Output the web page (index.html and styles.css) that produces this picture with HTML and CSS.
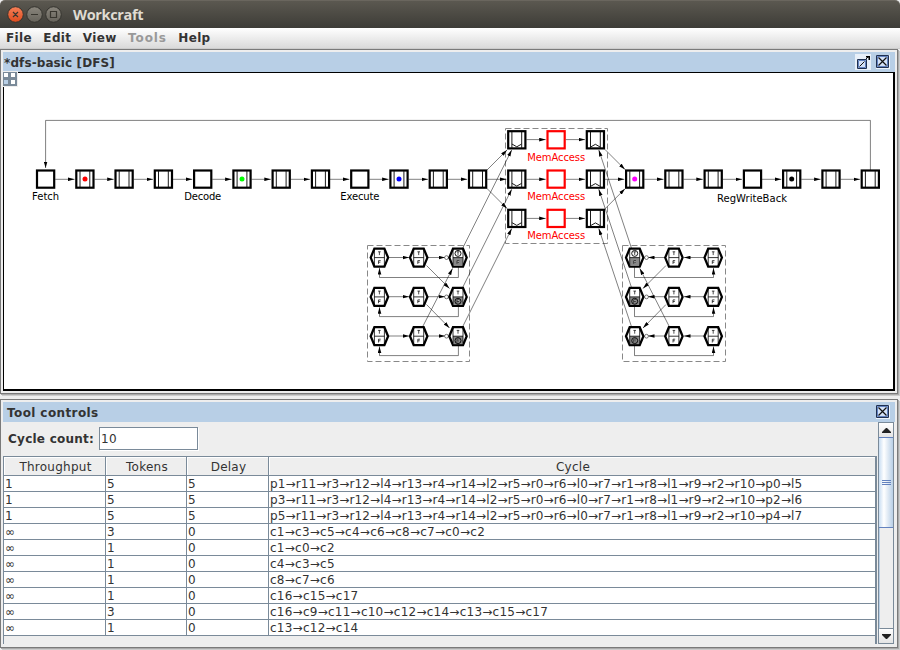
FILE: index.html
```html
<!DOCTYPE html>
<html lang="en">
<head>
<meta charset="utf-8">
<title>Workcraft</title>
<link rel="stylesheet" href="styles.css">
</head>
<body>
<header class="titlebar">
  <svg class="window-buttons" width="60" height="28" viewBox="0 0 60 28">
    <defs>
      <linearGradient id="orange" x2="0" y2="1"><stop stop-color="#f58058"/><stop offset="1" stop-color="#de4b1d"/></linearGradient>
      <linearGradient id="grey" x2="0" y2="1"><stop stop-color="#8a867d"/><stop offset="1" stop-color="#66635b"/></linearGradient>
    </defs>
    <g stroke="#34332e"><circle cx="11.5" cy="14.5" r="7.8" fill="url(#orange)"/><circle cx="30.5" cy="14.5" r="7.8" fill="url(#grey)"/><circle cx="49.5" cy="14.5" r="7.8" fill="url(#grey)"/></g>
    <path d="M9 12l5 5M14 12l-5 5M27 14.5h7M46.5 11.5h6v6h-6z" fill="none" stroke="#38362f" stroke-width="1.2"/>
  </svg>
  <span class="app-name">Workcraft</span>
</header>
<nav class="menubar"><span>File</span><span>Edit</span><span>View</span><span class="disabled">Tools</span><span>Help</span></nav>
<main class="desktop">
<section class="frame editor">
  <div class="frame-title"><span class="doc-name">*dfs-basic [DFS]</span>
    <svg class="icon" width="16" height="16" viewBox="0 0 16 16"><path fill="#e8f0f9" d="M0 0h16v16H0z"/><path d="M2.500 5.500h9v9h-9z" fill="#d4e2f7" stroke="#1f3050"/><path d="M3.500 6.500h7v7h-7z" fill="none" stroke="#6382bf"/><path d="M4.500 12.500l5-5M11 5l2-2" stroke="#111"/><path d="M11 2h4v4h-1.500V3.500H11z"/></svg>
    <svg class="icon" width="16" height="16" viewBox="0 0 16 16"><use href="#close"/></svg>
  </div>
  <div class="canvas">
    <svg class="grid-button" width="14" height="14" viewBox="0 0 14 14"><path fill="#7a8a99" d="M0 0h14v14H0z"/><path fill="#fff" d="M1 1h4v4H1zM8 1h4v4H8zM8 8h4v4H8z"/><path fill="#b8cfe6" d="M1 8h4v4H1z"/></svg>
    <svg class="diagram" width="889" height="316" viewBox="4 73 889 316">
      <defs>
        <marker id="arrow" orient="auto" markerUnits="userSpaceOnUse" markerWidth="8" markerHeight="4" refX="6.500" refY="2"><path d="M0 .2L6.500 2L0 3.800z"/></marker>
        <g id="close"><path d="M1 1h14v14H1z" fill="#eef4fb"/><path d="M1.500 1.500h12v12h-12z" fill="#d4e2f7" stroke="#1f3050"/><path d="M2.500 2.500h10v10h-10z" fill="none" stroke="#6382bf"/><path d="M3.500 3.500l8 8M11.500 3.500l-8 8" stroke="#111" stroke-width="1.200"/></g>
        <rect id="box" x="-8.600" y="-8.600" width="17.200" height="17.200"/>
        <g id="reg"><use href="#box"/><path d="M-4.900-8v16M4.900-8v16" stroke-width=".9"/></g>
        <g id="push"><use href="#reg"/><path d="M-4.900 4.200L0 7L4.900 4.200" stroke-width=".9"/></g>
        <g id="pop"><use href="#reg"/><path d="M-4.900 7.300L0 4.500L4.900 7.300" stroke-width=".9"/></g>
        <path id="hull" d="M-8.700 0L-5-9H5L8.700 0L5 9H-5z" stroke-width="2.300"/>
        <path id="half" d="M-5 0H5V8H-5z" fill="#888" stroke="none"/>
        <g id="lines"><path d="M-5-9V9M5-9V9M-5 0H5" stroke-width=".8"/><path d="M-1.300-5.800H1.300M0-5.800V-2.500M-.9 6.300V3H1.300M-.9 4.600H1" stroke-width=".7"/></g>
        <g id="hex"><use href="#hull"/><use href="#lines"/></g>
        <g id="hexT"><use href="#hull"/><use href="#half"/><use href="#lines"/><circle cy="-4.200" r="3" stroke-width=".9" fill="none"/></g>
        <g id="hexF"><use href="#hull"/><use href="#half"/><use href="#lines"/><circle cy="4.400" r="3" stroke-width=".9" fill="none"/></g>
      </defs>
      <g class="dashes"><path d="M505.500 128.500H607.500V243.500H505.500z"/><path d="M367.500 245.500H469.500V361.500H367.500z"/><path d="M622.500 245.500H725.500V361.500H622.500z"/></g>
      <g class="arcs">
        <path d="M870.400 170V120.400H45.600V168"/>
        <path d="M55.200 179.300H74.500"/><path d="M94.500 179.300H113.700"/><path d="M133.700 179.300H153"/><path d="M173 179.300H192.300"/><path d="M212.300 179.300H231.600"/><path d="M251.600 179.300H270.800"/><path d="M290.800 179.300H310"/><path d="M330 179.300H349.400"/><path d="M369.400 179.300H388.600"/><path d="M408.600 179.300H428"/><path d="M448 179.300H467.200"/><path d="M487.200 179.300H506.400"/><path d="M526.400 179.300H545.700"/><path d="M565.700 179.300H585"/><path d="M605 179.300H624.300"/><path d="M644.300 179.300H663.500"/><path d="M683.500 179.300H702.800"/><path d="M722.800 179.300H742"/><path d="M762 179.300H781.300"/><path d="M801.300 179.300H820.600"/><path d="M840.600 179.300H860"/>
        <path d="M526.400 139.600H545.700"/><path d="M565.700 139.600H585"/><path d="M526.400 218.400H545.700"/><path d="M565.700 218.400H585"/>
        <path d="M487 170L507 150"/><path d="M487 188.500L507 208.500"/><path d="M605 149.500L625 169.500"/><path d="M605 208.800L625 188.800"/>
        <path d="M462.500 248.500L511.700 150"/><path d="M462.500 287.800L511.700 189.300"/><path d="M462.500 327L511.700 228.600"/>
        <path d="M631.600 248.500L598.800 150"/><path d="M631.600 287.800L598.800 189.300"/><path d="M631.600 327L598.800 228.600"/>
        <path d="M388.500 257.500H409"/><path d="M428 257.500H445"/><path d="M388.500 296.700H409"/><path d="M428 296.700H445"/><path d="M388.500 336H409"/><path d="M428 336H445"/>
        <path d="M704 257.500H684"/><path d="M665 257.500H648"/><path d="M704 296.700H684"/><path d="M665 296.700H648"/><path d="M704 336H684"/><path d="M665 336H648"/>
        <path d="M458.400 267V277.500H379.500V268"/><path d="M458.400 306V316.600H379.500V307.300"/><path d="M458.400 345V355.600H379.500V346.500"/>
        <path d="M634.500 267V277.500H713.500V268"/><path d="M634.500 306V316.600H713.500V307.300"/><path d="M634.500 345V355.600H713.500V346.500"/>
        <path d="M426.500 265.500L449.500 288.500"/><path d="M426.500 304.500L449.500 328"/><path d="M423 326L452.500 268.500"/>
        <path d="M666 265.500L643 288.500"/><path d="M666 304.500L643 328"/><path d="M669 326L639.800 268.500"/>
      </g>
      <g class="circles"><circle cx="446.500" cy="257.600" r="1.900"/><circle cx="446.500" cy="296.900" r="1.900"/><circle cx="446.500" cy="336.200" r="1.900"/><circle cx="646.500" cy="257.600" r="1.900"/><circle cx="646.500" cy="296.900" r="1.900"/><circle cx="646.500" cy="336.200" r="1.900"/></g>
      <g class="nodes">
        <use href="#box" x="45.600" y="179.100"/><use href="#reg" x="84.900" y="179.100"/><use href="#reg" x="124.100" y="179.100"/><use href="#reg" x="163.400" y="179.100"/><use href="#box" x="202.700" y="179.100"/><use href="#reg" x="242" y="179.100"/><use href="#reg" x="281.200" y="179.100"/><use href="#reg" x="320.500" y="179.100"/><use href="#box" x="359.800" y="179.100"/><use href="#reg" x="399" y="179.100"/><use href="#reg" x="438.300" y="179.100"/><use href="#reg" x="477.600" y="179.100"/>
        <use href="#push" x="516.800" y="139.800"/><use href="#push" x="516.800" y="179.100"/><use href="#push" x="516.800" y="218.400"/>
        <g class="selected"><use href="#box" x="556.100" y="139.800"/><use href="#box" x="556.100" y="179.100"/><use href="#box" x="556.100" y="218.400"/></g>
        <use href="#pop" x="595.400" y="139.800"/><use href="#pop" x="595.400" y="179.100"/><use href="#pop" x="595.400" y="218.400"/>
        <use href="#reg" x="634.700" y="179.100"/><use href="#reg" x="673.900" y="179.100"/><use href="#reg" x="713.200" y="179.100"/><use href="#box" x="752.500" y="179.100"/><use href="#reg" x="791.700" y="179.100"/><use href="#reg" x="831" y="179.100"/><use href="#reg" x="870.300" y="179.100"/>
        <use href="#hex" x="379.400" y="257.600"/><use href="#hex" x="418.700" y="257.600"/><use href="#hexT" x="458" y="257.600"/>
        <use href="#hex" x="379.400" y="296.900"/><use href="#hex" x="418.700" y="296.900"/><use href="#hexF" x="458" y="296.900"/>
        <use href="#hex" x="379.400" y="336.200"/><use href="#hex" x="418.700" y="336.200"/><use href="#hexF" x="458" y="336.200"/>
        <use href="#hexT" x="634.700" y="257.600"/><use href="#hex" x="673.900" y="257.600"/><use href="#hex" x="713.200" y="257.600"/>
        <use href="#hexF" x="634.700" y="296.900"/><use href="#hex" x="673.900" y="296.900"/><use href="#hex" x="713.200" y="296.900"/>
        <use href="#hexF" x="634.700" y="336.200"/><use href="#hex" x="673.900" y="336.200"/><use href="#hex" x="713.200" y="336.200"/>
      </g>
      <g><circle cx="85" cy="179.100" r="2.500" fill="#f00"/><circle cx="242" cy="179.100" r="2.500" fill="#0f0"/><circle cx="399" cy="179.100" r="2.500" fill="#00f"/><circle cx="634.700" cy="179.100" r="2.500" fill="#f0f"/><circle cx="791.700" cy="179.100" r="2.500"/></g>
      <g class="labels"><text x="45.600" y="200" textLength="27">Fetch</text><text x="202.700" y="200" textLength="37">Decode</text><text x="359.800" y="200" textLength="39">Execute</text><text x="752" y="202" textLength="70">RegWriteBack</text>
        <g fill="#f00"><text x="556.200" y="161" textLength="58">MemAccess</text><text x="556.200" y="200" textLength="58">MemAccess</text><text x="556.200" y="239" textLength="58">MemAccess</text></g></g>
    </svg>
  </div>
</section>
<section class="frame tools">
  <div class="frame-title"><span class="tool-name">Tool controls</span><svg class="icon" width="16" height="16" viewBox="0 0 16 16"><use href="#close"/></svg></div>
  <div class="tool-body">
    <div class="tool-main">
      <div class="count-row"><label>Cycle count:</label><div class="count-field">10</div></div>
      <div class="table-wrap">
      <table>
        <colgroup><col class="c1"><col class="c2"><col class="c3"><col></colgroup>
        <thead><tr><th>Throughput</th><th>Tokens</th><th>Delay</th><th>Cycle</th></tr></thead>
        <tbody>
          <tr><td>1</td><td>5</td><td>5</td><td class="long">p1→r11→r3→r12→l4→r13→r4→r14→l2→r5→r0→r6→l0→r7→r1→r8→l1→r9→r2→r10→p0→l5</td></tr>
          <tr><td>1</td><td>5</td><td>5</td><td class="long">p3→r11→r3→r12→l4→r13→r4→r14→l2→r5→r0→r6→l0→r7→r1→r8→l1→r9→r2→r10→p2→l6</td></tr>
          <tr><td>1</td><td>5</td><td>5</td><td class="long">p5→r11→r3→r12→l4→r13→r4→r14→l2→r5→r0→r6→l0→r7→r1→r8→l1→r9→r2→r10→p4→l7</td></tr>
          <tr><td>∞</td><td>3</td><td>0</td><td>c1→c3→c5→c4→c6→c8→c7→c0→c2</td></tr>
          <tr><td>∞</td><td>1</td><td>0</td><td>c1→c0→c2</td></tr>
          <tr><td>∞</td><td>1</td><td>0</td><td>c4→c3→c5</td></tr>
          <tr><td>∞</td><td>1</td><td>0</td><td>c8→c7→c6</td></tr>
          <tr><td>∞</td><td>1</td><td>0</td><td>c16→c15→c17</td></tr>
          <tr><td>∞</td><td>3</td><td>0</td><td>c16→c9→c11→c10→c12→c14→c13→c15→c17</td></tr>
          <tr><td>∞</td><td>1</td><td>0</td><td>c13→c12→c14</td></tr>
        </tbody>
      </table>
      </div>
    </div>
    <div class="scrollbar">
      <div class="scroll-button"><svg width="9" height="5" viewBox="0 0 9 5"><path d="M0 5V4l4-4h1l4 4v1z" fill="#222"/></svg></div>
      <div class="thumb"><i></i><i></i><i></i></div>
      <div class="track"></div>
      <div class="scroll-button"><svg width="9" height="5" viewBox="0 0 9 5"><path d="M0 0v1l4 4h1l4-4V0z" fill="#222"/></svg></div>
    </div>
  </div>
</section>
</main>
</body>
</html>
```

FILE: styles.css
```css
* { box-sizing: border-box; }
body {
  margin: 0; width: 900px; height: 650px; overflow: hidden;
  display: flex; flex-direction: column;
  background: #eee; color: #333;
  font: 12px/16px "DejaVu Sans", sans-serif; letter-spacing: .25px;
}
.titlebar {
  height: 28px; flex: none; display: flex; align-items: center; padding-left: 4px;
  background: linear-gradient(#5b5850, #3d3c37); border-top: 1px solid #6a665e;
  border-radius: 5px 5px 0 0;
}
.window-buttons { margin-top: -1px; }
.app-name {
  margin-left: 9px; color: #dfdbd2; font: bold 14.5px/20px "Open Sans", sans-serif;
  letter-spacing: -.35px;
}
.menubar {
  height: 21px; flex: none; display: flex; gap: 11.4px; padding: 2px 6px 0;
  background: linear-gradient(#fff, #dadada); border-bottom: 1px solid #ccc;
  font-weight: bold; letter-spacing: .35px;
}
.menubar .disabled { color: #999; letter-spacing: .9px; }
.desktop { display: flex; flex-direction: column; gap: 5px; width: 898px; }
.frame {
  border: 1px solid #7a7a7a; padding: 2px; background: #eee;
  box-shadow: 1px 1px #aaa, 2px 2px #ccc;
  display: flex; flex-direction: column;
}
.editor { height: 345px; }
.tools { height: 249px; }
.frame-title {
  height: 20px; flex: none; display: flex; align-items: center; gap: 4px;
  padding-right: 4px; background: #b8cfe6; font-weight: bold;
}
.doc-name { flex: 1; padding: 1px 0 0 1px; letter-spacing: .1px; }
.tool-name { flex: 1; padding: 1px 0 0 4px; letter-spacing: .4px; }
.icon { display: block; }
.canvas {
  position: relative; height: 319px; width: 892px; background: #fff;
  border: solid #000; border-width: 1px 2px 2px 1px;
}
.grid-button { position: absolute; left: -1px; top: -1px; outline: 1px solid #eee; }
.diagram { display: block; letter-spacing: 0; }
.dashes path { fill: none; stroke: #888; stroke-dasharray: 6 3; }
.arcs path { fill: none; stroke: #000; stroke-width: .5; marker-end: url(#arrow); }
.circles { fill: #fff; stroke: #000; stroke-width: .5; }
.nodes { fill: #fff; stroke: #000; stroke-width: 2.2; }
.nodes .selected { stroke: #f00; }
.labels { font-size: 10px; text-anchor: middle; }
.tool-body { display: flex; height: 223px; }
.tool-main { width: 874px; height: 223px; overflow: hidden; }
.count-row { display: flex; align-items: center; gap: 6px; height: 33px; margin-bottom: 1px; padding-left: 5px; font-weight: bold; }
.count-row label { width: 85px; white-space: nowrap; }
.count-field {
  width: 99px; height: 23px; padding: 3px 1px; background: #fff;
  border: 1px solid #7a8a99; box-shadow: 1px 1px #fff; font-weight: normal;
}
.table-wrap { height: 188px; border-left: 1px solid #7a8a99; border-right: 2px solid #7a8a99; }
table { width: 871px; border-collapse: separate; border-spacing: 0; table-layout: fixed; border-top: 1px solid #7a8a99; }
.c1 { width: 102px; } .c2 { width: 81px; } .c3 { width: 82px; }
th, td { padding: 0 0 0 1px; border: solid #7a8a99; border-width: 0 1px 1px 0; white-space: nowrap; overflow: hidden; }
th { height: 19px; padding: 2px 0 0 2px; font-weight: normal; box-shadow: inset 1px 1px #fff; }
td { height: 16px; padding-top: 1px; line-height: 14px; background: #fff; text-align: left; }
.long { letter-spacing: .13px; }
th:last-child, td:last-child { border-right: 0; }
.scrollbar { width: 16px; margin-left: 1px; height: 222px; display: flex; flex-direction: column; border: 1px solid #7a8a99; background: #eee; }
.scroll-button { height: 14px; flex: none; display: flex; align-items: center; justify-content: center; background: linear-gradient(#fff, #e4e4e4); }
.thumb {
  height: 91px; border: 1px solid #6382bf; border-width: 1px 0;
  display: flex; flex-direction: column; align-items: center; justify-content: center; gap: 1px;
  background: linear-gradient(90deg, #c8ddf2, #fff 35%, #b8cfe6);
}
.thumb i { width: 9px; height: 1px; background: #6382bf; }
.track { flex: 1; border-left: 1px solid #b8cfe6; border-bottom: 1px solid #7a8a99; }
```
